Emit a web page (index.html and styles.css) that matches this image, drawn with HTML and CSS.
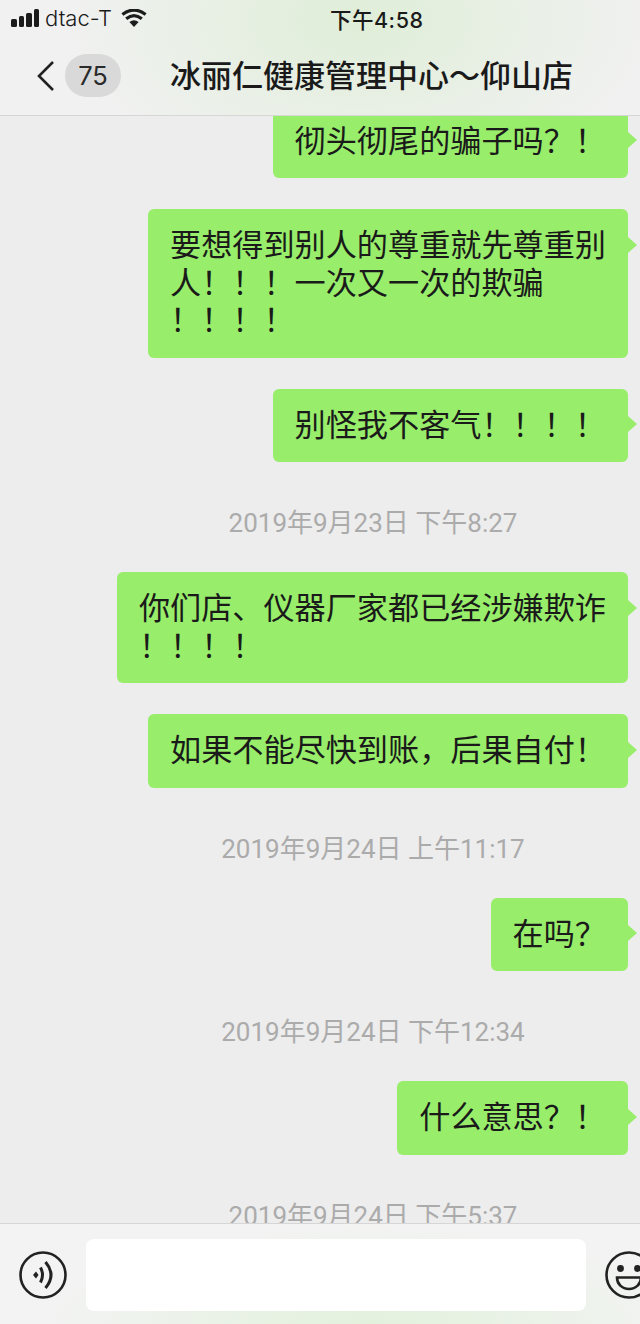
FILE: index.html
```html
<!DOCTYPE html>
<html lang="zh">
<head>
    <meta charset="UTF-8">
    <meta name="viewport" content="width=device-width, initial-scale=1.0">
    <title>冰丽仁健康管理中心～仰山店</title>
    <link rel="stylesheet" href="styles.css">
</head>
<body>
    <div class="phone">
        <header class="top-bar">
            <div class="status-bar">
                <div class="status-left">
                    <div class="signal">
                        <span class="bar bar-1"></span>
                        <span class="bar bar-2"></span>
                        <span class="bar bar-3"></span>
                        <span class="bar bar-4"></span>
                    </div>
                    <span class="carrier">dtac-T</span>
                    <svg class="wifi" width="26" height="18" viewBox="0 0 26 18">
                        <path d="M13 18 L8.4 13 Q13 9.4 17.6 13 Z" fill="#1c1c1c"/>
                        <path d="M5.2 9.8 Q13 3.4 20.8 9.8" fill="none" stroke="#1c1c1c" stroke-width="3.2"/>
                        <path d="M1.4 5.6 Q13 -3.4 24.6 5.6" fill="none" stroke="#1c1c1c" stroke-width="3.2"/>
                    </svg>
                </div>
                <span class="clock">下午4:58</span>
            </div>
            <nav class="nav-bar">
                <svg class="back" width="20" height="32" viewBox="0 0 20 32">
                    <path d="M17 2 L3 16 L17 30" fill="none" stroke="#222" stroke-width="2.6"/>
                </svg>
                <span class="badge">75</span>
                <h1 class="title">冰丽仁健康管理中心～仰山店</h1>
            </nav>
        </header>

        <main class="chat">
            <div class="bubble first">彻头彻尾的骗子吗？！</div>
            <div class="bubble">要想得到别人的尊重就先尊重别<br>人！！！一次又一次的欺骗<br>！！！！</div>
            <div class="bubble">别怪我不客气！！！！</div>
            <div class="time">2019年9月23日 下午8:27</div>
            <div class="bubble">你们店、仪器厂家都已经涉嫌欺诈<br>！！！！</div>
            <div class="bubble">如果不能尽快到账，后果自付！</div>
            <div class="time">2019年9月24日 上午11:17</div>
            <div class="bubble">在吗？</div>
            <div class="time">2019年9月24日 下午12:34</div>
            <div class="bubble">什么意思？！</div>
            <div class="time">2019年9月24日 下午5:37</div>
        </main>

        <footer class="input-bar">
            <svg class="round-icon" width="48" height="48" viewBox="0 0 48 48">
                <circle cx="24" cy="24" r="22.5" fill="none" stroke="#222" stroke-width="2.6"/>
                <path d="M14 24 L17 20.5 L19.5 24 L17 27.5 Z" fill="#222"/>
                <path d="M21.5 16.5 Q25.5 24 21.5 31.5" fill="none" stroke="#222" stroke-width="3"/>
                <path d="M26.5 11 Q37.5 24 26.5 37" fill="none" stroke="#222" stroke-width="3"/>
            </svg>
            <div class="text-field"></div>
            <svg class="round-icon" width="48" height="48" viewBox="0 0 48 48">
                <circle cx="24" cy="24" r="22.5" fill="none" stroke="#222" stroke-width="2.6"/>
                <circle cx="15.5" cy="17.5" r="3.4" fill="#222"/>
                <circle cx="32.5" cy="17.5" r="3.4" fill="#222"/>
                <path d="M12 26.5 H36 C36 33 31 38 24 38 C17 38 12 33 12 26.5 Z" fill="none" stroke="#222" stroke-width="2.6"/>
            </svg>
        </footer>
    </div>
</body>
</html>
```

FILE: styles.css
```css
body {
    margin: 0;
    font-family: "Inter", "Noto Sans CJK SC", sans-serif;
    color: #1a1a1a;
}

.phone {
    width: 640px;
    height: 1324px;
    display: flex;
    flex-direction: column;
    overflow: hidden;
    background-color: #ededed;
}

.top-bar {
    height: 115px;
    flex: none;
    border-bottom: 1px solid #d6d6d6;
    background: radial-gradient(ellipse 300px 170px at 360px 20px, #dfeed8, rgba(223, 238, 216, 0) 100%), #f1f1f1;
}

.status-bar {
    height: 36px;
    display: flex;
    align-items: center;
    position: relative;
    padding-left: 11px;
}

.status-left {
    display: flex;
    align-items: center;
}

.signal {
    display: flex;
    align-items: flex-end;
    gap: 2px;
    height: 18px;
}

.bar {
    width: 5.5px;
    border-radius: 1.5px;
    background: #1c1c1c;
}

.bar-1 { height: 8px; }
.bar-2 { height: 11px; }
.bar-3 { height: 14px; }
.bar-4 { height: 18px; }

.carrier {
    margin-left: 6px;
    font-size: 22px;
    font-weight: 300;
}

.wifi {
    margin-left: 9px;
}

.clock {
    position: absolute;
    left: 330px;
    font-size: 21.5px;
    font-weight: 500;
    letter-spacing: 0.5px;
}

.nav-bar {
    display: flex;
    align-items: center;
    height: 79px;
    padding-left: 36px;
}

.badge {
    margin-left: 9px;
    width: 56px;
    height: 43px;
    border-radius: 22px;
    background: #d9d9d9;
    display: flex;
    align-items: center;
    justify-content: center;
    font-size: 25.5px;
    color: #2a2a2a;
}

.title {
    margin: 0 0 4px 49px;
    font-size: 31px;
    font-weight: 500;
    white-space: nowrap;
}

.chat {
    flex: 1;
    min-height: 0;
    overflow: hidden;
    display: flex;
    flex-direction: column;
    align-items: flex-end;
    padding-right: 12px;
}

.bubble {
    position: relative;
    flex: none;
    padding: 18px 22px;
    margin-bottom: 31px;
    background: #98ed6a;
    border-radius: 6px;
    font-size: 31.15px;
    line-height: 37.5px;
    white-space: nowrap;
}

.bubble::after {
    content: "";
    position: absolute;
    top: 27.5px;
    right: -9px;
    width: 0;
    height: 0;
    border-top: 8.5px solid transparent;
    border-bottom: 8.5px solid transparent;
    border-left: 9px solid #98ed6a;
}

.first {
    margin-top: -11.5px;
}

.time {
    flex: none;
    align-self: center;
    margin: 14px 0 33px 118px;
    font-family: "Roboto", "Noto Sans CJK SC", sans-serif;
    font-size: 26px;
    line-height: 32px;
    color: #ababab;
    white-space: nowrap;
}

.input-bar {
    height: 101px;
    flex: none;
    box-sizing: border-box;
    border-top: 1px solid #d6d6d6;
    padding: 15px 0 13px 19px;
    display: flex;
    align-items: center;
    gap: 19px;
    overflow: hidden;
    background: radial-gradient(ellipse 330px 100px at 370px 100px, #e2f1dc, rgba(226, 241, 220, 0) 100%), #f3f3f3;
}

.round-icon {
    flex: none;
}

.text-field {
    flex: none;
    width: 500px;
    height: 72px;
    border-radius: 8px;
    background: #fff;
}
```
